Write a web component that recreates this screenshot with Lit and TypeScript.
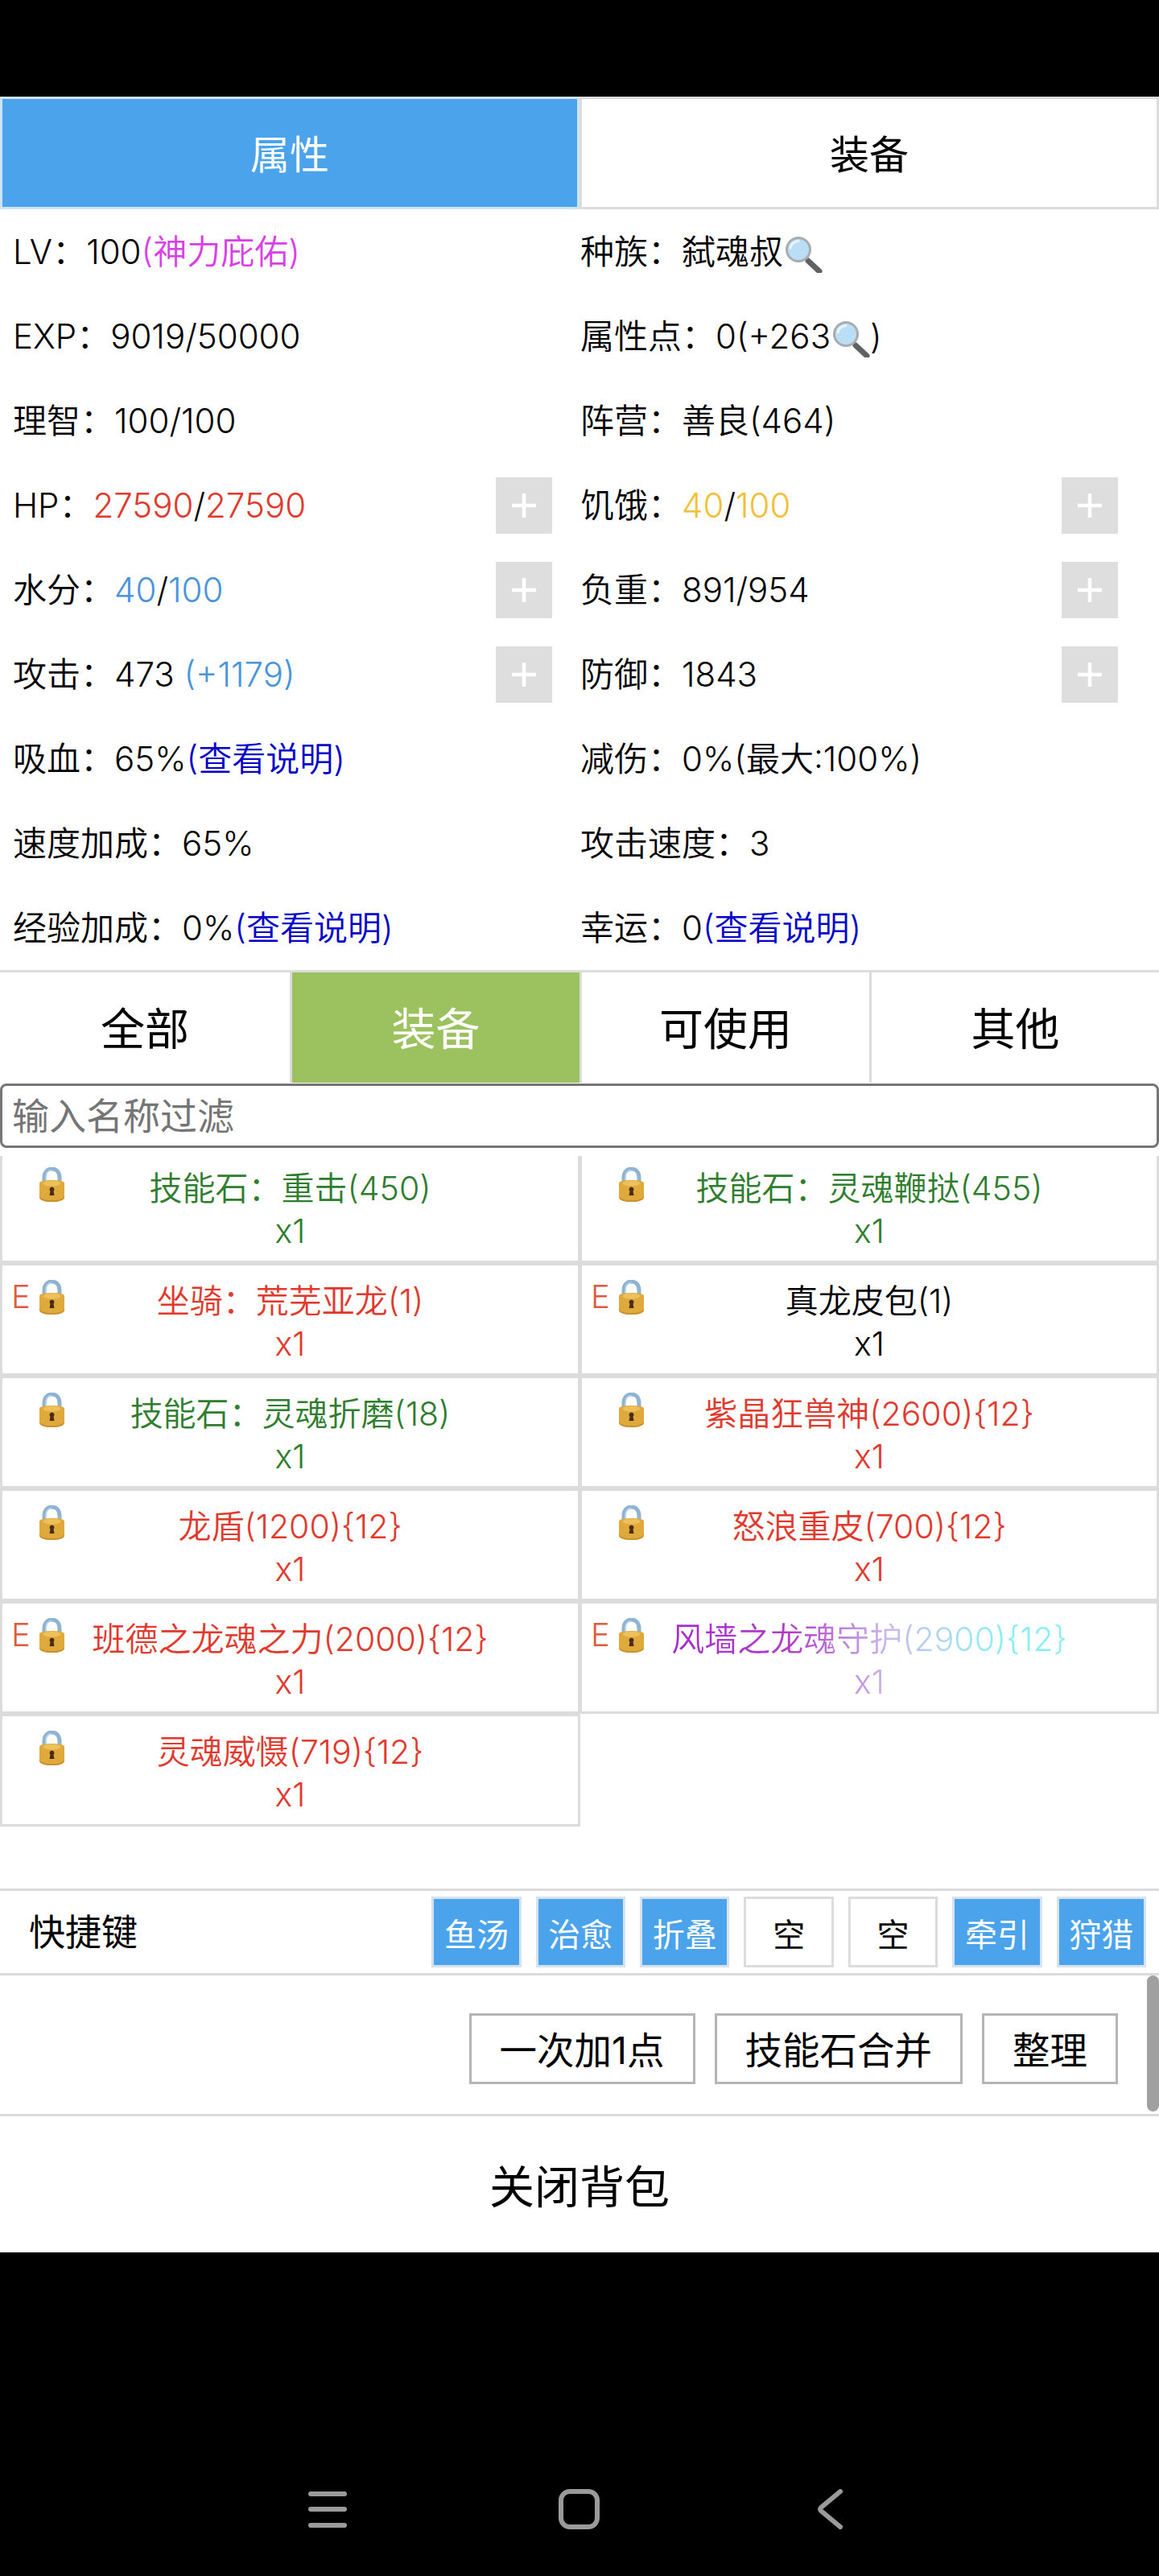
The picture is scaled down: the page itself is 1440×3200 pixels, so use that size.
import { LitElement, html, css, svg } from "lit";
import { customElement } from "lit/decorators.js";

const lock = svg`<svg class="lock" viewBox="0 0 31 43" aria-hidden="true">
  <path d="M6 22V13C6 6 10 2 15.500 2S25 6 25 13V22" fill="none" stroke="#8fb4d2" stroke-width="5"/>
  <path d="M8 20V13C8 7 11 4 15 3.500" fill="none" stroke="#bcd6ea" stroke-width="1.500"/>
  <path d="M0 20C0 17 7 16 15.500 16S31 17 31 20V37C31 41 24 43 15.500 43S0 41 0 37Z" fill="#e0a93c"/>
  <path d="M0 37C0 41 7 43 15.500 43S31 41 31 37V35C31 39 24 41 15.500 41S0 39 0 35Z" fill="#c8922f"/>
  <ellipse cx="15.500" cy="20" rx="11" ry="3.500" fill="#ecc05a"/>
  <path d="M15.500 24.500a3 3 0 0 1 2 5.200L18.500 35h-6l1-5.300a3 3 0 0 1 2-5.200Z" fill="#4a2c14"/>
</svg>`;

const glass = svg`<svg class="glass" viewBox="0 0 47 45" aria-hidden="true">
  <path d="M29 30L43 43" stroke="#5f6163" stroke-width="7" stroke-linecap="round"/>
  <circle cx="17" cy="16" r="14.500" fill="#b9def6" stroke="#a9acae" stroke-width="3"/>
  <path d="M7 14C8 9 12 6 17 5.500" fill="none" stroke="#e9f5fd" stroke-width="3" stroke-linecap="round"/>
</svg>`;

type Item = { name: string; cls: string; e?: boolean };
const items: Item[] = [
  { name: "技能石：重击(450)", cls: "green" },
  { name: "技能石：灵魂鞭挞(455)", cls: "green" },
  { name: "坐骑：荒芜亚龙(1)", cls: "red", e: true },
  { name: "真龙皮包(1)", cls: "black", e: true },
  { name: "技能石：灵魂折磨(18)", cls: "green" },
  { name: "紫晶狂兽神(2600){12}", cls: "red" },
  { name: "龙盾(1200){12}", cls: "red" },
  { name: "怒浪重皮(700){12}", cls: "red" },
  { name: "班德之龙魂之力(2000){12}", cls: "red", e: true },
  { name: "风墙之龙魂守护(2900){12}", cls: "rainbow", e: true },
  { name: "灵魂威慑(719){12}", cls: "red" },
];

const quick: [string, boolean][] = [
  ["鱼汤", true], ["治愈", true], ["折叠", true], ["空", false],
  ["空", false], ["牵引", true], ["狩猎", true],
];

@customElement("app-root")
export class AppRoot extends LitElement {
  static styles = css`
    :host {
      display: block;
      min-height: 3200px;
      background: #000;
      font-family: Inter, "Noto Sans CJK SC", sans-serif;
      color: #000;
      box-sizing: border-box;
      padding-top: 120px;
    }
    .panel { background: #fff; height: 2678px; display: flex; flex-direction: column; }

    .tabs { display: grid; grid-template-columns: 720px 720px; height: 140px; }
    .tab {
      box-sizing: border-box; border: 3px solid #dcdcdc; display: flex;
      align-items: center; justify-content: center; font-size: 49px; background: #fff; padding-bottom: 4px;
    }
    .tab.on { background: #4ba3eb; color: #fff; border-color: #d0e3f2; }

    .stats {
      display: grid; grid-template-columns: 703px 703px; grid-auto-rows: 105px;
      padding-left: 18px; height: 945px; font-size: 42px; font-weight: 350;
    }
    .stat { display: flex; align-items: center; justify-content: space-between; padding-right: 35px; white-space: nowrap; }
    .stat:nth-child(odd) .txt { margin-left: -2px; }
    .txt { margin-bottom: 6px; }
    .plus { width: 70px; height: 70px; background: #dedede; display: flex; align-items: center; justify-content: center; }
    .plus svg { width: 34px; height: 34px; }
    .glass { width: 47px; height: 45px; vertical-align: -11px; margin-left: 2px; }
    .purple { color: #d83fe6; }
    .hp { color: #e0392e; }
    .hunger { color: #f2c037; }
    .water { color: #4a94dc; }
    .link { color: #0000c8; }

    .filters {
      display: grid; grid-template-columns: repeat(4, 360px); height: 140px;
      border-top: 3px solid #dcdcdc; box-sizing: border-box;
    }
    .filter {
      box-sizing: border-box; border-left: 3px solid #dcdcdc; display: flex;
      align-items: center; justify-content: center; font-size: 55px; padding-bottom: 6px;
    }
    .filter.first { border-left: 0; }
    .filter.on { background: #9bc25f; color: #fff; }

    .search {
      box-sizing: border-box; display: flex; align-items: center; height: 80px; margin-top: 1px;
      border: 3px solid #767676; border-radius: 8px; padding: 0 0 7px 12px;
      font-size: 46px; color: #757575;
    }

    .list { margin-top: 10px; height: 910px; overflow: hidden; }
    .grid { display: grid; grid-template-columns: 720px 720px; grid-auto-rows: 140px; margin-top: -7px; }
    .cell {
      position: relative; box-sizing: border-box; border: 3px solid #dcdcdc; font-weight: 350;
      padding-top: 18px; text-align: center; font-size: 41px; line-height: 53px; white-space: nowrap;
    }
    .cell:nth-child(odd) { margin-right: -1px; }
    .cell:nth-child(even) { position: relative; z-index: 1; background: #fff; }
    .lock { position: absolute; left: 46px; top: 18px; width: 31px; height: 43px; }
    .e { position: absolute; left: 11px; top: 14px; color: #dd5b3e; font-size: 40px; line-height: 50px; }
    .green { color: #2f7d2e; }
    .red { color: #e0392e; }
    .black { color: #000; }
    .rainbow {
      display: inline-block;
      background: linear-gradient(to right, #a52cd0 0%, #b23cc8 30%, #c9b6ec 54%, #a8dcf0 70%, #86f0f8 85%, #88eef4 100%);
      -webkit-background-clip: text; background-clip: text; color: transparent;
    }

    .quick {
      box-sizing: border-box; height: 108px; border-top: 3px solid #dcdcdc; border-bottom: 3px solid #dcdcdc;
      display: flex; align-items: center; padding: 0 16px 0 36px;
    }
    .quick .label { font-size: 45px; margin-right: auto; padding-bottom: 6px; }
    .keys { display: flex; gap: 18px; }
    .key {
      box-sizing: border-box; width: 111.400px; height: 88px; border: 3px solid #dcdcdc;
      display: flex; align-items: center; justify-content: center; font-size: 40px; padding-top: 2px;
    }
    .key.on { background: #4ba3eb; color: #fff; border-color: #d6e3ee; }

    .actions {
      position: relative; box-sizing: border-box; height: 175px; border-bottom: 3px solid #dcdcdc;
      display: flex; align-items: center; justify-content: flex-end; gap: 24px; padding: 10px 51px 0 0;
    }
    .btn {
      box-sizing: border-box; height: 88px; border: 3px solid #b5b5b5; padding: 0 35px 4px;
      display: flex; align-items: center; font-size: 46.500px;
    }
    .bar { position: absolute; right: 0; top: 0; width: 15px; height: 169px; border-radius: 8px; background: #a0a0a0; }

    .close { flex: 1; display: flex; align-items: center; justify-content: center; font-size: 56px; padding-bottom: 3px; }

    .nav { display: flex; align-items: center; padding: 294px 0 0 383px; height: 50px; }
    .nav svg { display: block; height: 50px; }
    .nav .menu { width: 48px; }
    .nav .home { width: 51px; margin-left: 263px; }
    .nav .back { width: 31px; margin-left: 271px; }
  `;

  private stat(content: unknown, plus = false) {
    return html`<div class="stat"><span class="txt">${content}</span>${plus
      ? html`<div class="plus"><svg viewBox="0 0 34 34"><path d="M17 2V32M2 17H32" stroke="#fff" stroke-width="4.500"/></svg></div>`
      : ""}</div>`;
  }

  render() {
    return html`
      <div class="panel">
        <div class="tabs">
          <div class="tab on">属性</div>
          <div class="tab">装备</div>
        </div>
        <div class="stats">
          ${this.stat(html`LV：100<span class="purple">(神力庇佑)</span>`)}
          ${this.stat(html`种族：弑魂叔${glass}`)}
          ${this.stat(html`EXP：9019/50000`)}
          ${this.stat(html`属性点：0(+263${glass})`)}
          ${this.stat(html`理智：100/100`)}
          ${this.stat(html`阵营：善良(464)`)}
          ${this.stat(html`HP：<span class="hp">27590</span>/<span class="hp">27590</span>`, true)}
          ${this.stat(html`饥饿：<span class="hunger">40</span>/<span class="hunger">100</span>`, true)}
          ${this.stat(html`水分：<span class="water">40</span>/<span class="water">100</span>`, true)}
          ${this.stat(html`负重：891/954`, true)}
          ${this.stat(html`攻击：473 <span class="water">(+1179)</span>`, true)}
          ${this.stat(html`防御：1843`, true)}
          ${this.stat(html`吸血：65%<span class="link">(查看说明)</span>`)}
          ${this.stat(html`减伤：0%(最大:100%)`)}
          ${this.stat(html`速度加成：65%`)}
          ${this.stat(html`攻击速度：3`)}
          ${this.stat(html`经验加成：0%<span class="link">(查看说明)</span>`)}
          ${this.stat(html`幸运：0<span class="link">(查看说明)</span>`)}
        </div>
        <div class="filters">
          <div class="filter first">全部</div>
          <div class="filter on">装备</div>
          <div class="filter">可使用</div>
          <div class="filter">其他</div>
        </div>
        <div class="search">输入名称过滤</div>
        <div class="list">
          <div class="grid">
            ${items.map(
              (it) => html`<div class="cell">
                ${it.e ? html`<span class="e">E</span>` : ""}${lock}
                <span class=${it.cls === "rainbow" ? "rainbow" : it.cls}>${it.name}<br />x1</span>
              </div>`
            )}
          </div>
        </div>
        <div class="quick">
          <div class="label">快捷键</div>
          <div class="keys">
            ${quick.map(([t, on]) => html`<div class="key ${on ? "on" : ""}">${t}</div>`)}
          </div>
        </div>
        <div class="actions">
          <div class="btn">一次加1点</div>
          <div class="btn">技能石合并</div>
          <div class="btn">整理</div>
          <div class="bar"></div>
        </div>
        <div class="close">关闭背包</div>
      </div>
      <div class="nav">
        <svg class="menu" viewBox="0 0 48 50"><path d="M3 6H45M3 25H45M3 45H45" stroke="#9a9a9a" stroke-width="6" stroke-linecap="round"/></svg>
        <svg class="home" viewBox="0 0 51 50"><rect x="3" y="3" width="45" height="44" rx="11" fill="none" stroke="#9a9a9a" stroke-width="6"/></svg>
        <svg class="back" viewBox="0 0 31 50"><path d="M28 3L4 23Q2 25 4 27L28 47" fill="none" stroke="#9a9a9a" stroke-width="6" stroke-linecap="round" stroke-linejoin="round"/></svg>
      </div>
    `;
  }
}
